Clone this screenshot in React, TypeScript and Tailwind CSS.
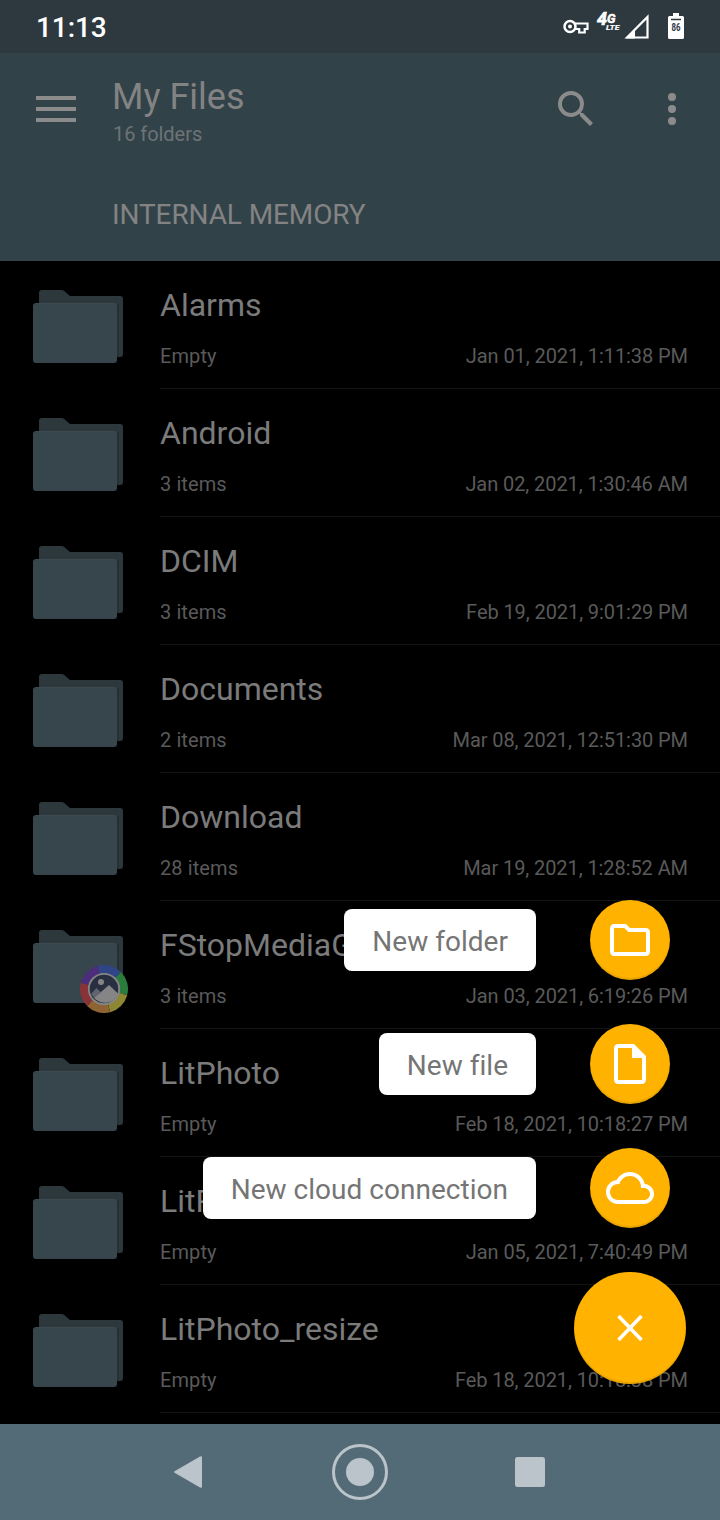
import type { ReactNode } from "react";

const files = [
  { name: "Alarms", info: "Empty", date: "Jan 01, 2021, 1:11:38 PM" },
  { name: "Android", info: "3 items", date: "Jan 02, 2021, 1:30:46 AM" },
  { name: "DCIM", info: "3 items", date: "Feb 19, 2021, 9:01:29 PM" },
  { name: "Documents", info: "2 items", date: "Mar 08, 2021, 12:51:30 PM" },
  { name: "Download", info: "28 items", date: "Mar 19, 2021, 1:28:52 AM" },
  { name: "FStopMediaGallery", info: "3 items", date: "Jan 03, 2021, 6:19:26 PM", badge: true },
  { name: "LitPhoto", info: "Empty", date: "Feb 18, 2021, 10:18:27 PM" },
  { name: "LitPhoto_edit", info: "Empty", date: "Jan 05, 2021, 7:40:49 PM" },
  { name: "LitPhoto_resize", info: "Empty", date: "Feb 18, 2021, 10:18:38 PM" },
];

const actions = [
  {
    label: "New folder",
    path: "M9.17 6l2 2H20v10H4V6h5.17M10 4H4c-1.1 0-2 .9-2 2v12c0 1.1.9 2 2 2h16c1.1 0 2-.9 2-2V8c0-1.1-.9-2-2-2h-8l-2-2z",
  },
  {
    label: "New file",
    path: "M6 2h8l6 6v12c0 1.1-.9 2-2 2H6c-1.1 0-2-.9-2-2V4c0-1.1.9-2 2-2zM6 4v16h12V9h-5V4H6z",
  },
  {
    label: "New cloud connection",
    path: "M19.35 10.04C18.67 6.59 15.64 4 12 4 9.11 4 6.6 5.64 5.35 8.04 2.34 8.36 0 10.91 0 14c0 3.31 2.69 6 6 6h13c2.76 0 5-2.24 5-5 0-2.64-2.05-4.78-4.65-4.96zM19 18H6c-2.21 0-4-1.79-4-4s1.79-4 4-4h.71C7.37 7.69 9.48 6 12 6c3.04 0 5.5 2.46 5.5 5.5v.5H19c1.66 0 3 1.34 3 3s-1.34 3-3 3z",
  },
];

function FolderIcon() {
  return (
    <svg width="90" height="73" viewBox="0 0 90 73">
      <path d="M9 0h19q2 0 3.500 1.200L37 6h50q3 0 3 3v55q0 3-3 3H6V3q0-3 3-3z" fill="#2d383d" />
      <rect x="84" y="14" width="2" height="53" fill="#273135" />
      <rect y="13" width="84" height="60" rx="3" fill="#37464d" />
      <path d="M3 13.500h78" stroke="#3c4a51" />
    </svg>
  );
}

function GalleryBadge() {
  return (
    <svg className="absolute left-[80px] top-16" width="48" height="48" viewBox="0 0 48 48">
      <g fill="none" strokeWidth="9" transform="rotate(-105 24 24)">
        <circle cx="24" cy="24" r="19.500" stroke="#2f4585" pathLength="6" strokeDasharray="1 5" />
        <circle cx="24" cy="24" r="19.500" stroke="#2b7a3e" pathLength="6" strokeDasharray="1 5" strokeDashoffset="-1" />
        <circle cx="24" cy="24" r="19.500" stroke="#8d8632" pathLength="6" strokeDasharray="1 5" strokeDashoffset="-2" />
        <circle cx="24" cy="24" r="19.500" stroke="#8d6432" pathLength="6" strokeDasharray="1 5" strokeDashoffset="-3" />
        <circle cx="24" cy="24" r="19.500" stroke="#873338" pathLength="6" strokeDasharray="1 5" strokeDashoffset="-4" />
        <circle cx="24" cy="24" r="19.500" stroke="#4b2d7a" pathLength="6" strokeDasharray="1 5" strokeDashoffset="-5" />
      </g>
      <circle cx="24" cy="24" r="15" fill="#282f41" />
      <path d="M11 29l5.500-6 4 4-6 6z" fill="#60646e" />
      <path d="M14 33l15-13 9.500 9A15 15 0 0 1 14 33z" fill="#858585" />
      <circle cx="21" cy="17" r="3" fill="#858585" />
      <circle cx="24" cy="24" r="15.200" fill="none" stroke="#858585" strokeWidth="1.800" />
    </svg>
  );
}

function StatusBar() {
  return (
    <div className="flex h-[53px] shrink-0 items-start justify-between bg-[#2d393f] pl-9 pr-9 text-white">
      <span className="pt-2.5 text-[28px] leading-9 font-medium tracking-[-0.1px]">11:13</span>
      <div className="flex items-start">
        <svg className="mt-[19px]" width="26" height="15" viewBox="0 0 26 15">
          <circle cx="7" cy="7.500" r="5.500" fill="none" stroke="white" strokeWidth="2.500" />
          <circle cx="7" cy="7.500" r="2" fill="white" />
          <path d="M12 4.500h12.500v5.500h-2.800v3.500h-5.500V10H12" fill="none" stroke="white" strokeWidth="2.200" />
        </svg>
        <div className="mt-[9px] h-6 w-[35px] pl-[7px]">
          <svg width="26" height="23" viewBox="0 0 26 23" fill="white" fontWeight="bold" fontStyle="italic">
            <text x="1" y="16" fontSize="18" stroke="white" strokeWidth=".7">4</text>
            <text x="11" y="13.500" fontSize="12" textLength="8.500" lengthAdjust="spacingAndGlyphs" stroke="white" strokeWidth=".5">G</text>
            <text x="10" y="21" fontSize="8" textLength="13.500" lengthAdjust="spacingAndGlyphs" stroke="white" strokeWidth=".2">LTE</text>
          </svg>
        </div>
        <svg className="mt-[14px]" width="25" height="25" viewBox="0 0 25 25">
          <path d="M3 23.500L23.500 3v20.500z" fill="none" stroke="white" strokeWidth="2.200" />
          <path d="M2 24.500l9-9v9z" fill="white" />
        </svg>
        <svg className="ml-[19px] mt-[13px]" width="16" height="26" viewBox="0 0 16 26">
          <path d="M5 0h6v3h3.500q1.500 0 1.500 1.500v20q0 1.500-1.500 1.500h-13Q0 26 0 24.500v-20Q0 3 1.500 3H5z" fill="white" />
          <path d="M3 6.500h10" stroke="#2d393f" strokeWidth="1.500" />
          <text x="3.500" y="18" fontSize="10" fontWeight="bold" textLength="9" lengthAdjust="spacingAndGlyphs" fill="#2d393f">86</text>
        </svg>
      </div>
    </div>
  );
}

function Header() {
  return (
    <header className="h-[208px] shrink-0 bg-[#324249] text-[#838383]">
      <div className="flex h-[112px] items-center pl-9 pr-6">
        <div className="flex w-10 flex-col gap-[7px]">
          <span className="h-1 bg-[#8b8b8b]" />
          <span className="h-1 bg-[#8b8b8b]" />
          <span className="h-1 bg-[#8b8b8b]" />
        </div>
        <div className="ml-9 flex-1 pt-0.5">
          <h1 className="text-[36px] leading-[44px]">My Files</h1>
          <p className="pt-[3px] pl-px text-[20px] leading-6 tracking-[-0.05px] text-[#6d7376]">16 folders</p>
        </div>
        <svg className="mr-12" width="48" height="48" viewBox="0 0 24 24" fill="#8b8b8b">
          <path d="M15.500 14h-.79l-.28-.27A6.471 6.471 0 0 0 16 9.500 6.500 6.500 0 1 0 9.500 16c1.610 0 3.090-.59 4.230-1.570l.27.28v.79l5 4.990L20.490 19l-4.990-5zm-6 0C7.010 14 5 11.990 5 9.500S7.010 5 9.500 5 14 7.010 14 9.500 11.990 14 9.500 14z" />
        </svg>
        <svg width="48" height="48" viewBox="0 0 48 48" fill="#8b8b8b">
          <circle cx="24" cy="12" r="4" />
          <circle cx="24" cy="24" r="4" />
          <circle cx="24" cy="36" r="4" />
        </svg>
      </div>
      <div className="pl-28 pt-[33px] text-[28px] leading-[34px] tracking-[-0.1px]">INTERNAL MEMORY</div>
    </header>
  );
}

function FileRow({ file }: { file: (typeof files)[0] }) {
  return (
    <div className="relative flex h-32 shrink-0">
      <div className="w-40 pl-[33px] pt-[29px]">
        <FolderIcon />
      </div>
      <div className="flex-1 border-b border-[#141414] pr-8 pt-6">
        <div className="text-[32px] leading-10 text-[#7b7b7b]">{file.name}</div>
        <div className="mt-[19px] flex justify-between text-[20px] leading-6 text-[#5a5a5a]">
          <span className="tracking-[0.1px]">{file.info}</span>
          <span className="tracking-[-0.08px]">{file.date}</span>
        </div>
      </div>
      {file.badge && <GalleryBadge />}
    </div>
  );
}

function Fab({ large, children }: { large?: boolean; children: ReactNode }) {
  return (
    <button
      className={`flex items-center justify-center rounded-full bg-[#ffb300] shadow-[inset_0_-2px_1px_rgba(0,0,0,0.09)] ${
        large ? "size-28" : "size-20"
      }`}
    >
      {children}
    </button>
  );
}

function SpeedDial() {
  return (
    <div className="absolute right-[34px] top-[900px] flex flex-col items-end gap-11">
      {actions.map((action) => (
        <div key={action.label} className="flex items-center gap-[54px] pr-4">
          <span className="flex h-[62px] items-center rounded-lg bg-white px-7 pt-[3px] text-[28px] tracking-[0.02px] text-[#757575]">
            {action.label}
          </span>
          <Fab>
            <svg width="48" height="48" viewBox="0 0 24 24" fill="white" fillRule="evenodd">
              <path d={action.path} />
            </svg>
          </Fab>
        </div>
      ))}
      <Fab large>
        <svg width="28" height="28" viewBox="0 0 28 28">
          <path d="M2.500 2l23 24M25.500 2l-23 24" stroke="white" strokeWidth="3.600" />
        </svg>
      </Fab>
    </div>
  );
}

function NavBar() {
  return (
    <nav className="h-24 shrink-0 bg-[#536b76]">
      <svg width="720" height="96" viewBox="0 0 720 96" fill="#bac4ca">
        <path d="M175 47l25-14.500q2-1 2 1v29q0 2-2 1L175 49q-2-1 0-2z" />
        <circle cx="360" cy="48" r="14" />
        <circle cx="360" cy="48" r="26.500" fill="none" stroke="#bac4ca" strokeWidth="3" />
        <rect x="515" y="33" width="30" height="30" rx="2.500" />
      </svg>
    </nav>
  );
}

export default function App() {
  return (
    <div className="relative flex h-[1520px] w-[720px] flex-col overflow-hidden bg-black font-['Roboto',sans-serif]">
      <StatusBar />
      <Header />
      <main className="flex flex-1 flex-col">
        {files.map((file) => (
          <FileRow key={file.name} file={file} />
        ))}
      </main>
      <NavBar />
      <SpeedDial />
    </div>
  );
}
